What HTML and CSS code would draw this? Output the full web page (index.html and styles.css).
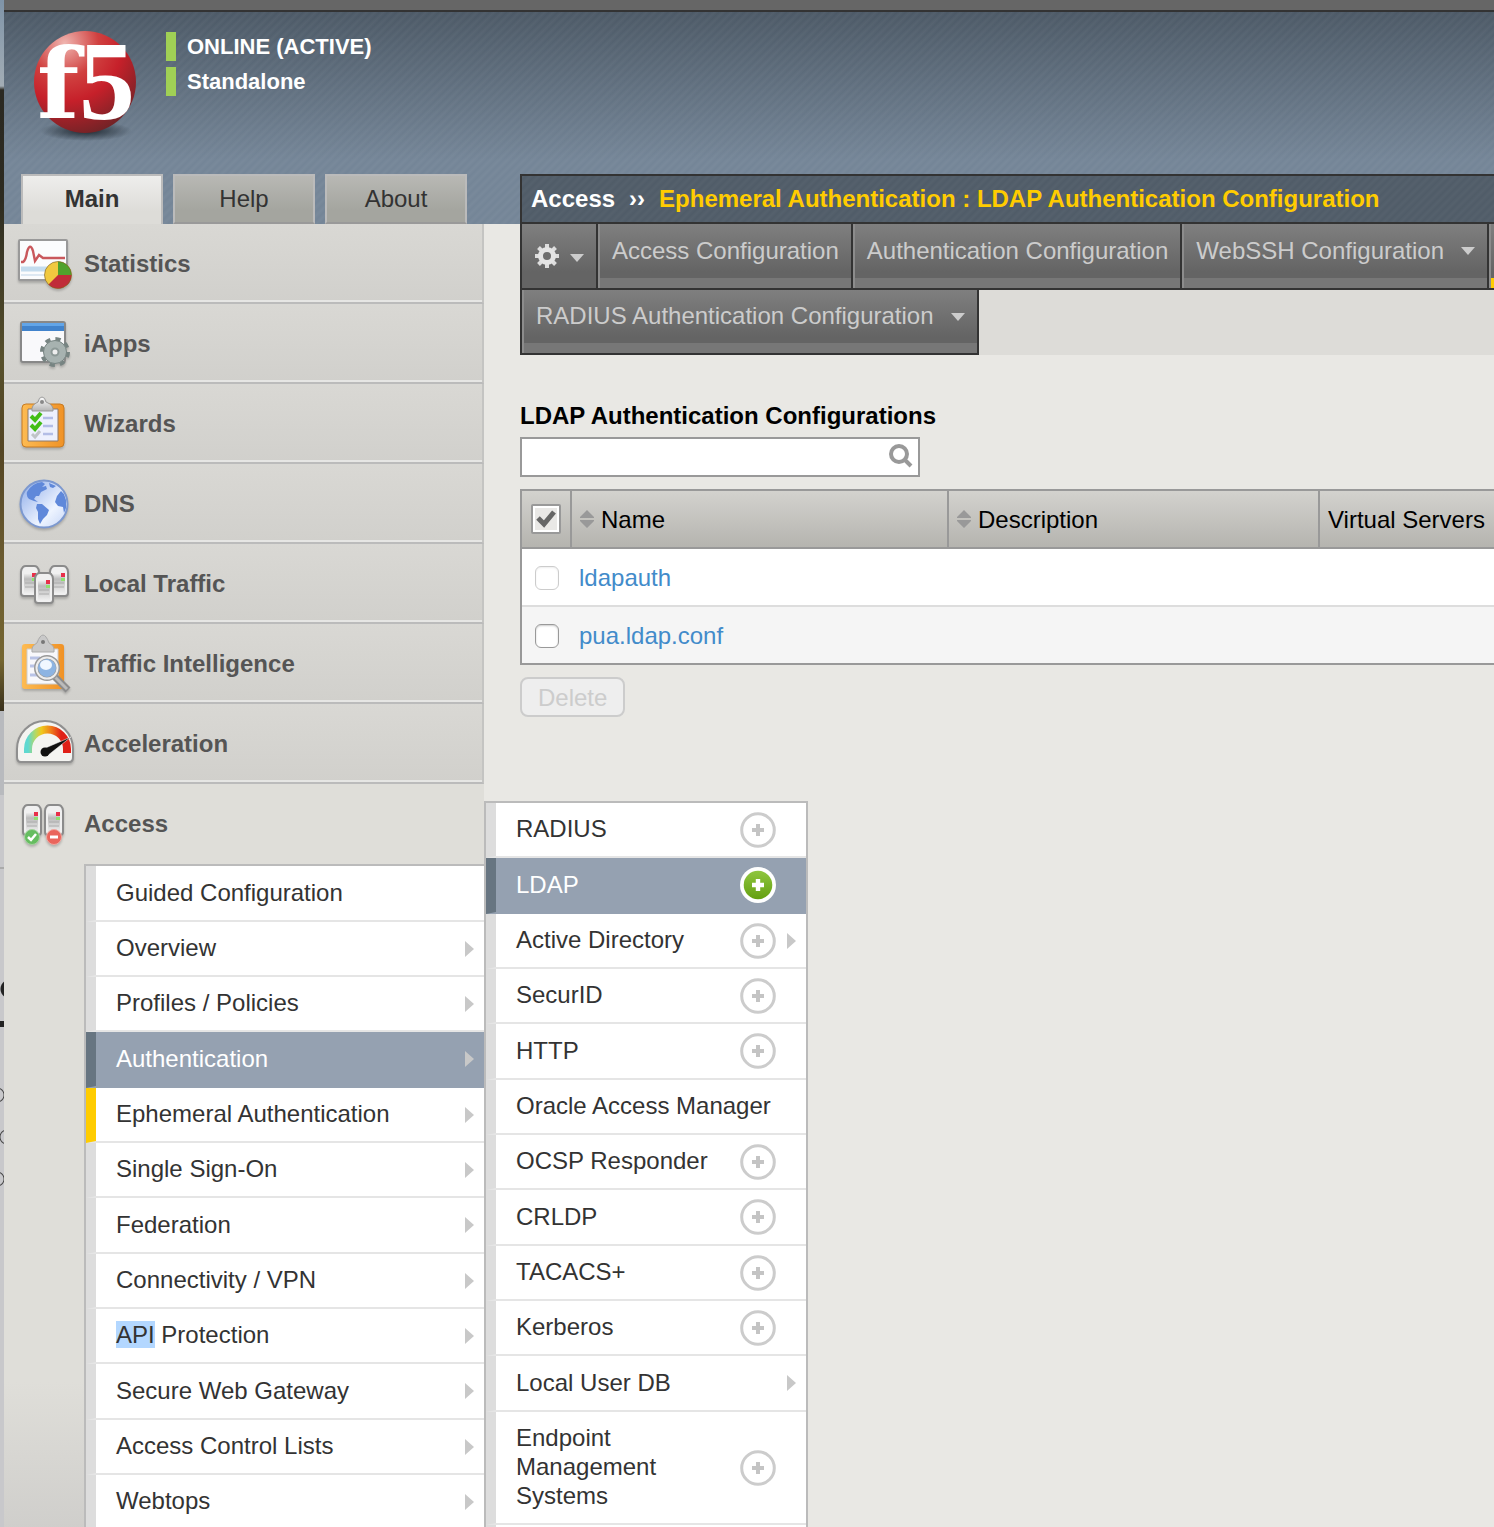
FILE: index.html
```html
<!DOCTYPE html>
<html lang="en">
<head>
<meta charset="utf-8">
<title>LDAP Authentication Configuration</title>
<meta name="viewport" content="width=device-width, initial-scale=1">
<link rel="stylesheet" href="styles.css">
</head>
<body>
<svg class="sprite" aria-hidden="true">
  <defs>
    <symbol id="arrow" viewBox="0 0 9 16"><path d="M0 0L9 8L0 16Z" fill="#c8c8c8"/></symbol>
    <symbol id="caret" viewBox="0 0 14 8"><path d="M0 0H14L7 8Z" fill="#ccc"/></symbol>
    <symbol id="plus" viewBox="0 0 36 36"><circle cx="18" cy="18" r="16.3" fill="#fff" stroke="#ccc" stroke-width="3"/><path d="M18 12V24M12 18H24" stroke="#c4c4c4" stroke-width="4"/></symbol>
    <symbol id="plus-on" viewBox="0 0 36 36"><circle cx="18" cy="18" r="18" fill="#fff"/><circle cx="18" cy="18" r="14.3" fill="url(#green)"/><path d="M18 12V24M12 18H24" stroke="#fff" stroke-width="4.4"/></symbol>
    <symbol id="sort" viewBox="0 0 14 18"><path d="M7 0L14 7V8H0V7ZM0 10H14V11L7 18L0 11Z" fill="#999"/></symbol>
    <linearGradient id="green" x2="0" y2="1"><stop offset="0" stop-color="#8fc640"/><stop offset="1" stop-color="#64a010"/></linearGradient>
    <linearGradient id="metal" x2="0" y2="1"><stop offset="0" stop-color="#fff"/><stop offset="1" stop-color="#b4b4b4"/></linearGradient>
    <linearGradient id="case" x2="0" y2="1"><stop offset="0" stop-color="#f4f4f4"/><stop offset=".3" stop-color="#bbb"/><stop offset="1" stop-color="#eee"/></linearGradient>
    <linearGradient id="board"><stop offset="0" stop-color="#fdbb52"/><stop offset="1" stop-color="#f09226"/></linearGradient>
    <linearGradient id="sea" x2="1" y2="1"><stop offset="0" stop-color="#8aa9e8"/><stop offset=".65" stop-color="#eef4ff"/><stop offset="1" stop-color="#c3d4f7"/></linearGradient>
    <linearGradient id="dial"><stop offset="0" stop-color="#5fd8d0"/><stop offset=".2" stop-color="#b9d860"/><stop offset=".35" stop-color="#f0c81c"/><stop offset=".6" stop-color="#ef7a1a"/><stop offset=".85" stop-color="#e02018"/></linearGradient>
    <radialGradient id="ball" cx=".3" cy=".12" r=".95"><stop offset="0" stop-color="#f0b5b0"/><stop offset=".35" stop-color="#d0403f"/><stop offset=".6" stop-color="#c6202a"/><stop offset="1" stop-color="#6d2326"/></radialGradient>
    <radialGradient id="shade"><stop offset="0" stop-color="#1d262e"/><stop offset="1" stop-color="#1d262e" stop-opacity="0"/></radialGradient>
    <g id="server">
      <path d="M1 7Q1 4 3 2Q4 1 6 1H14Q16 1 17 2Q19 4 19 7V28Q19 31 16 31H4Q1 31 1 28Z" fill="#f0f0f0" stroke="#8b8b8b" stroke-width="2"/>
      <path d="M4 8H16V28H4Z" fill="url(#case)"/>
      <path d="M5 18H15M5 22H15" stroke="#aaa"/>
      <path d="M12 8H16V12H12Z" fill="#e8304a"/><path d="M12 13H16V16H12Z" fill="#8fe070"/>
    </g>
  </defs>
</svg>

<div class="window">
<div class="page">
  <header class="identity">
    <svg class="logo" viewBox="0 0 108 112" role="img" aria-label="f5">
      <ellipse cx="54" cy="100" rx="46" ry="10" fill="url(#shade)"/>
      <circle cx="53" cy="51" r="51" fill="url(#ball)"/>
      <text class="logo-f" x="5" y="87">f</text><text class="logo-five" x="47" y="88">5</text>
    </svg>
    <div class="states"><strong class="state">ONLINE (ACTIVE)</strong><strong class="state">Standalone</strong></div>
  </header>

  <aside class="sidebar">
    <nav class="tabs" aria-label="Panels">
      <a class="tab tab-current" href="#">Main</a>
      <a class="tab" href="#">Help</a>
      <a class="tab" href="#">About</a>
    </nav>
    <ul class="nav">
      <li class="section"><a class="section-link" href="#">
        <svg class="icon" viewBox="0 0 60 60" aria-hidden="true"><rect x="5" y="7" width="48" height="40" rx="1" fill="#fbfcfd" stroke="#999" stroke-width="2"/><path d="M7 29H9Q12 27 13 19Q16 9 19 18L21 28L25 22L29 25H51" fill="none" stroke="#c9585c" stroke-width="2.400"/><path d="M7 36H51" stroke="#c4dcee" stroke-width="5"/><path d="M7 42H51" stroke="#dde8f2" stroke-width="2"/><circle cx="44" cy="42" r="13.500" fill="#f1c93f"/><path d="M44 42V28.500A13.500 13.500 0 0 1 57.500 42Z" fill="#50a22c"/><path d="M44 42H57.500A13.500 13.500 0 0 1 34.500 51.500Z" fill="#c02c39"/><circle cx="44" cy="42" r="13.500" fill="none" stroke="#7a5a20" stroke-opacity=".6"/></svg>
        Statistics</a></li>
      <li class="section"><a class="section-link" href="#">
        <svg class="icon" viewBox="0 0 60 60" aria-hidden="true"><rect x="7" y="9" width="44" height="40" rx="2" fill="#f9f9fb" stroke="#888" stroke-width="2"/><path d="M8 10H50V18H8Z" fill="#4183cc"/><path d="M8 10H50V13H8Z" fill="#62a5e8"/><circle cx="41" cy="39" r="12.500" fill="none" stroke="#778482" stroke-width="5" stroke-dasharray="5 4.817"/><circle cx="41" cy="39" r="11.500" fill="#a7b2b0" stroke="#778482"/><circle cx="41" cy="39" r="3.500" fill="#eee" stroke="#8c9896" stroke-width="2"/></svg>
        iApps</a></li>
      <li class="section"><a class="section-link" href="#">
        <svg class="icon" viewBox="0 0 60 60" aria-hidden="true"><rect x="8" y="11" width="42" height="43" rx="4" fill="url(#board)" stroke="#c77b22"/><path d="M14 16H44V48H14Z" fill="#edf0fd" stroke="#8a7a70"/><path d="M29 25H39M29 33H39M29 41H39" stroke="#b3bde6" stroke-width="2.500"/><path d="M17 23L21 27L27 20M17 32L21 36L27 29" fill="none" stroke="#41bd16" stroke-width="4"/><path d="M18 41L21 44L26 38" fill="none" stroke="#c0c4c8" stroke-width="3"/><path d="M18 18Q17 12 24 9Q25 4 28 4Q31 4 32 9Q40 12 39 18Z" fill="url(#metal)" stroke="#999"/><circle cx="28" cy="9" r="2" fill="#888"/></svg>
        Wizards</a></li>
      <li class="section"><a class="section-link" href="#">
        <svg class="icon" viewBox="0 0 60 60" aria-hidden="true"><circle cx="30" cy="31" r="23.500" fill="url(#sea)" stroke="#7c98cf" stroke-width="2"/><path d="M13 19Q18 10 28 9L31 11L28 14L32 13L33 16L27 19L25 23L22 23L20 26L24 29L20 28L15 26Q12 23 13 19ZM35 10L42 13L39 15L36 14ZM23 31L28 31L35 37L33 42L29 46L26 51L24 46L24 39L22 35ZM43 23L47 18L50 21L52 27L52 35L50 40L49 34L44 33L41 29Z" fill="#5f88da"/></svg>
        DNS</a></li>
      <li class="section"><a class="section-link" href="#">
        <svg class="icon" viewBox="0 0 60 60" aria-hidden="true"><use href="#server" x="6" y="12"/><use href="#server" x="35" y="12"/><use href="#server" x="20" y="19"/></svg>
        Local Traffic</a></li>
      <li class="section"><a class="section-link" href="#">
        <svg class="icon" viewBox="0 0 60 60" aria-hidden="true"><rect x="8" y="11" width="42" height="45" rx="3" fill="url(#board)"/><path d="M13 16H44V51H13Z" fill="#f8f8fb" stroke="#ccc"/><path d="M16 25H26M16 33H24M16 42H26" stroke="#b9c3e6" stroke-width="3"/><path d="M18 19Q17 13 23 10Q26 2 29 2Q32 2 35 10Q41 13 40 19Z" fill="#c9c9c9" stroke="#aaa"/><circle cx="29" cy="9" r="2" fill="#777"/><path d="M41 44L54 57" stroke="#8c8c8c" stroke-width="7"/><path d="M41 44L53 56" stroke="#bbb" stroke-width="3"/><circle cx="33" cy="35" r="11" fill="#8db4e2" stroke="#999" stroke-width="4"/><circle cx="33" cy="35" r="10.500" fill="none" stroke="#eee" stroke-width="2"/><ellipse cx="32" cy="32" rx="6" ry="5" fill="#f0f7ff"/></svg>
        Traffic Intelligence</a></li>
      <li class="section"><a class="section-link" href="#">
        <svg class="icon" viewBox="0 0 60 60" aria-hidden="true"><path d="M3 36A28 28 0 0 1 59 36V44Q59 49 55 49H7Q3 49 3 44Z" fill="#f4f4f1" stroke="#8f8f8f" stroke-width="2"/><path d="M14 40V36A17 17 0 0 1 53 36V40" fill="none" stroke="url(#dial)" stroke-width="8"/><path d="M29 36L57 24L33 43Z" fill="#111" stroke="#fff" stroke-width=".500"/><circle cx="31" cy="39" r="4.500" fill="#111"/></svg>
        Acceleration</a></li>
      <li class="section section-open"><a class="section-link" href="#">
        <svg class="icon" viewBox="0 0 60 60" aria-hidden="true"><use href="#server" x="8" y="11"/><use href="#server" x="30" y="11"/><circle cx="18" cy="44" r="7.500" fill="#66bd60" stroke="#a4d29e"/><path d="M14 44L17 47L22 41" fill="none" stroke="#fff" stroke-width="2.500"/><circle cx="40" cy="44" r="7.500" fill="#ea655c" stroke="#efa7a0"/><path d="M36 44H44" stroke="#fff" stroke-width="3"/></svg>
        Access</a>
        <ul class="menu submenu">
          <li class="row"><a class="row-link" href="#">Guided Configuration</a></li>
          <li class="row"><a class="row-link" href="#">Overview</a><svg class="arrow" aria-hidden="true"><use href="#arrow"/></svg></li>
          <li class="row"><a class="row-link" href="#">Profiles / Policies</a><svg class="arrow" aria-hidden="true"><use href="#arrow"/></svg></li>
          <li class="row row-hover"><a class="row-link" href="#">Authentication</a><svg class="arrow" aria-hidden="true"><use href="#arrow"/></svg></li>
          <li class="row row-current"><a class="row-link" href="#">Ephemeral Authentication</a><svg class="arrow" aria-hidden="true"><use href="#arrow"/></svg></li>
          <li class="row"><a class="row-link" href="#">Single Sign-On</a><svg class="arrow" aria-hidden="true"><use href="#arrow"/></svg></li>
          <li class="row"><a class="row-link" href="#">Federation</a><svg class="arrow" aria-hidden="true"><use href="#arrow"/></svg></li>
          <li class="row"><a class="row-link" href="#">Connectivity / VPN</a><svg class="arrow" aria-hidden="true"><use href="#arrow"/></svg></li>
          <li class="row"><a class="row-link" href="#"><span class="selected">API</span> Protection</a><svg class="arrow" aria-hidden="true"><use href="#arrow"/></svg></li>
          <li class="row"><a class="row-link" href="#">Secure Web Gateway</a><svg class="arrow" aria-hidden="true"><use href="#arrow"/></svg></li>
          <li class="row"><a class="row-link" href="#">Access Control Lists</a><svg class="arrow" aria-hidden="true"><use href="#arrow"/></svg></li>
          <li class="row"><a class="row-link" href="#">Webtops</a><svg class="arrow" aria-hidden="true"><use href="#arrow"/></svg></li>
        </ul>
        <ul class="menu flyout">
          <li class="row"><a class="row-link" href="#">RADIUS</a><a class="add" href="#" aria-label="Add RADIUS"><svg><use href="#plus"/></svg></a></li>
          <li class="row row-hover"><a class="row-link" href="#">LDAP</a><a class="add" href="#" aria-label="Add LDAP"><svg><use href="#plus-on"/></svg></a></li>
          <li class="row"><a class="row-link" href="#">Active Directory</a><a class="add" href="#" aria-label="Add Active Directory"><svg><use href="#plus"/></svg></a><svg class="arrow" aria-hidden="true"><use href="#arrow"/></svg></li>
          <li class="row"><a class="row-link" href="#">SecurID</a><a class="add" href="#" aria-label="Add SecurID"><svg><use href="#plus"/></svg></a></li>
          <li class="row"><a class="row-link" href="#">HTTP</a><a class="add" href="#" aria-label="Add HTTP"><svg><use href="#plus"/></svg></a></li>
          <li class="row"><a class="row-link" href="#">Oracle Access Manager</a></li>
          <li class="row"><a class="row-link" href="#">OCSP Responder</a><a class="add" href="#" aria-label="Add OCSP Responder"><svg><use href="#plus"/></svg></a></li>
          <li class="row"><a class="row-link" href="#">CRLDP</a><a class="add" href="#" aria-label="Add CRLDP"><svg><use href="#plus"/></svg></a></li>
          <li class="row"><a class="row-link" href="#">TACACS+</a><a class="add" href="#" aria-label="Add TACACS+"><svg><use href="#plus"/></svg></a></li>
          <li class="row"><a class="row-link" href="#">Kerberos</a><a class="add" href="#" aria-label="Add Kerberos"><svg><use href="#plus"/></svg></a></li>
          <li class="row"><a class="row-link" href="#">Local User DB</a><svg class="arrow" aria-hidden="true"><use href="#arrow"/></svg></li>
          <li class="row"><a class="row-link" href="#">Endpoint Management Systems</a><a class="add" href="#" aria-label="Add Endpoint Management Systems"><svg><use href="#plus"/></svg></a></li>
          <li class="row"></li>
        </ul>
      </li>
    </ul>
  </aside>

  <main class="content">
    <h1 class="crumbs"><span>Access</span><span>››</span><span class="crumb-here">Ephemeral Authentication : LDAP Authentication Configuration</span></h1>
    <nav class="pages" aria-label="Configuration pages">
      <div class="pages-line">
        <button class="gear" type="button" aria-label="Options">
          <svg class="gear-icon" viewBox="0 0 26 26" aria-hidden="true"><g stroke="#ddd" stroke-width="4"><path d="M13 1V25M1 13H25M4.500 4.500L21.500 21.500M21.500 4.500L4.500 21.500"/></g><circle cx="13" cy="13" r="6.500" fill="#6e6e6e" stroke="#e4e4e4" stroke-width="5"/></svg>
          <svg class="caret" aria-hidden="true"><use href="#caret"/></svg>
        </button>
        <a class="page-tab" href="#">Access Configuration</a>
        <a class="page-tab" href="#">Authentication Configuration</a>
        <a class="page-tab" href="#">WebSSH Configuration<svg class="caret" aria-hidden="true"><use href="#caret"/></svg></a>
        <span class="page-tab page-tab-current"></span>
      </div>
      <div class="pages-line">
        <a class="page-tab" href="#">RADIUS Authentication Configuration<svg class="caret" aria-hidden="true"><use href="#caret"/></svg></a>
      </div>
    </nav>

    <section class="list">
      <h2 class="list-title"><label for="filter">LDAP Authentication Configurations</label></h2>
      <div class="search">
        <input class="search-box" id="filter" type="text">
        <svg class="search-icon" viewBox="0 0 24 24" aria-hidden="true"><circle cx="10" cy="10" r="8" fill="none" stroke="#999" stroke-width="4"/><path d="M15 15L22 22" stroke="#999" stroke-width="4"/></svg>
      </div>
      <table class="configs">
        <thead><tr>
          <th class="col-check"><input class="check-all" type="checkbox" checked aria-label="Select all"></th>
          <th class="col-name"><span class="sortable"><svg class="sort" aria-hidden="true"><use href="#sort"/></svg>Name</span></th>
          <th class="col-description"><span class="sortable"><svg class="sort" aria-hidden="true"><use href="#sort"/></svg>Description</span></th>
          <th class="col-servers">Virtual Servers</th>
        </tr></thead>
        <tbody>
          <tr><td class="cell-check"><input class="check" type="checkbox" disabled aria-label="Select ldapauth"></td><td><a class="config" href="#">ldapauth</a></td><td></td><td></td></tr>
          <tr><td class="cell-check"><input class="check" type="checkbox" aria-label="Select pua.ldap.conf"></td><td><a class="config" href="#">pua.ldap.conf</a></td><td></td><td></td></tr>
        </tbody>
      </table>
      <button class="delete" type="button" disabled>Delete</button>
    </section>
  </main>
</div>
</div>
</body>
</html>
```
FILE: styles.css
```css
* { box-sizing: border-box; }

body {
  margin: 0;
  font: 24px/29px "Liberation Sans", Arial, sans-serif;
  color: #333;
}

ul { margin: 0; padding: 0; list-style: none; }
a { color: inherit; text-decoration: none; }
svg { display: block; flex: none; }
button, input { margin: 0; font: inherit; }
.sprite { position: absolute; width: 0; height: 0; }

/* The sliver of desktop that shows left of the browser window */
.window {
  height: 100vh;
  overflow: hidden;
  padding-left: 4px;
  background:
    radial-gradient(circle at 10px 989px, #222 9px, transparent 10px),
    linear-gradient(#222, #222) 0 1021px / 4px 6px no-repeat,
    radial-gradient(circle at -3px 1095px, transparent 6px, #444 7px, transparent 8px),
    radial-gradient(circle at 7px 1137px, transparent 6px, #444 7px, transparent 8px),
    radial-gradient(circle at -3px 1179px, transparent 6px, #444 7px, transparent 8px),
    linear-gradient(#aaa, #aaa) 0 867px / 4px 2px no-repeat,
    linear-gradient(#7f94a8, #a3adb5 86px, #2b2922 90px, #2d2b21 200px, #57502c 360px, #544524 450px, #6b5b30 560px, #756631 660px, #39301c 711px, #b8babe 711px, #b8babe 795px, #c8c8cb 795px);
}

.page {
  display: grid;
  grid-template-columns: 480px minmax(0, 1fr);
  grid-template-rows: 162px auto;
  min-height: 100%;
  border-top: 10px solid #666;
  background:
    linear-gradient(#333, #333) 0 0 / 100% 2px no-repeat,
    repeating-linear-gradient(135deg, rgba(255, 255, 255, .04), transparent 3px, rgba(255, 255, 255, .04) 6px) 0 0 / 100% 214px no-repeat,
    linear-gradient(#4c5966, #748597 150px, #748597) 0 0 / 100% 214px no-repeat,
    #e9e8e4;
}

.identity {
  grid-column: 1 / -1;
  display: flex;
  gap: 26px;
  padding: 21px 28px 0;
  height: 164px;
}
.logo { width: 108px; height: 112px; overflow: visible; }
.logo-f, .logo-five { fill: #fff; }
.logo-f { font: bold 98px "DejaVu Serif", serif; }
.logo-five { font: bold 112px "Liberation Serif", serif; }
.states { display: flex; flex-direction: column; gap: 6px; padding-top: 1px; }
.state {
  border-left: 10px solid #a0d055;
  padding-left: 11px;
  font-size: 22px;
  color: #fff;
}

/* Sidebar */
.sidebar { display: flex; flex-direction: column; padding-top: 2px; }
.tabs { display: flex; gap: 10px; padding-left: 17px; }
.tab {
  width: 142px;
  height: 50px;
  border: 2px solid #bbb;
  border-bottom-color: #999;
  background: linear-gradient(#b8b8b4, #a4a59f 75%);
  line-height: 46px;
  text-align: center;
}
.tab-current {
  border-bottom: 0;
  background: linear-gradient(#eeeeec, #dddcd8 75%);
  font-weight: bold;
}
.nav { flex: 1; display: flex; flex-direction: column; }
.section {
  height: 80px;
  border-right: 2px solid #c4c4c2;
  border-bottom: 2px solid #bbb;
  box-shadow: inset 0 -2px #e6e6e4;
  background: linear-gradient(#d9d8d4, #d1d0cc);
}
.section-open {
  position: relative;
  flex: 1;
  height: auto;
  border: 0;
  box-shadow: none;
  background: linear-gradient(#dfded9 80%, #cfcecb);
}
.section-link {
  display: flex;
  align-items: center;
  gap: 10px;
  height: 80px;
  padding: 0 0 2px 10px;
  font-weight: bold;
  color: #555;
}
.icon { width: 60px; height: 60px; filter: drop-shadow(0 2px 1px rgba(0, 0, 0, .2)); }

/* Menus */
.menu { border: 2px solid #bbb; background: #fff; }
.submenu { margin-left: 80px; border-right: 0; }
.flyout { position: absolute; top: 17px; left: 480px; width: 324px; }
.row {
  display: flex;
  align-items: center;
  min-height: 55px;
  padding-right: 10px;
  border-left: 10px solid #ddd;
  border-bottom: 2px solid #e5e5e5;
}
.submenu .row:nth-child(3n+1), .flyout .row:nth-child(3n+2) { min-height: 56px; }
.row-link { flex: 1; padding: 11px 0 13px 20px; }
.row-hover { border-left-color: #677581; border-bottom-color: #95a1b1; background: #95a1b1; color: #fff; }
.row-current { border-left-color: #fc0; }
.arrow { width: 9px; height: 16px; }
.add { width: 36px; height: 36px; margin-right: 20px; }
.add svg { width: 36px; height: 36px; }
.add:has(+ .arrow) { margin-right: 11px; }
.selected { background: #b3d7ff; }

/* Content */
.content { padding: 2px 0 0 36px; overflow: hidden; }
.crumbs {
  display: flex;
  gap: 14px;
  height: 50px;
  margin: 0;
  padding-left: 9px;
  border: solid #333;
  border-width: 2px 0 2px 2px;
  background:
    repeating-linear-gradient(135deg, rgba(255, 255, 255, .03), transparent 3px, rgba(255, 255, 255, .03) 6px),
    #505c68;
  font-size: 24px;
  line-height: 46px;
  color: #fff;
  white-space: nowrap;
}
.crumb-here { color: #fc0; }
.pages { background: #dddcd8; }
.pages-line { display: flex; border-left: 2px solid #333; overflow: hidden; }
.gear, .page-tab {
  flex: none;
  display: flex;
  height: 66px;
  border: 0 solid #333;
  border-width: 0 2px 2px 0;
  background: linear-gradient(#7f7f7f, #646464 75%);
  color: #ccc;
}
.gear { align-items: center; gap: 10px; width: 76px; padding: 0 10px 0 12px; }
.gear-icon { width: 26px; height: 26px; }
.gear .caret { margin-top: 4px; }
.page-tab {
  gap: 17px;
  padding: 0 12px 10px 14px;
  box-shadow: inset 2px 0 #8c8c8c, inset 0 -10px #777;
  line-height: 54px;
}
.page-tab-current { width: 320px; box-shadow: inset 2px 0 #8c8c8c, inset 0 -10px #fc0; }
.pages-line + .pages-line .page-tab { height: 65px; line-height: 52px; }
.caret { width: 14px; height: 8px; align-self: center; }

.list { padding-top: 45px; color: #000; }
.list-title { margin: 0 0 5px; font-size: 24px; line-height: 32px; }
.search {
  display: flex;
  align-items: center;
  width: 400px;
  height: 40px;
  border: 2px solid #999;
  background: #fff;
}
.search-box { flex: 1; height: 36px; border: 0; padding: 0 8px; background: none; }
.search-icon { width: 24px; height: 24px; margin: 0 5px 2px 0; }

.configs {
  width: 100%;
  margin: 12px 0;
  border: solid #999;
  border-width: 2px 0 2px 2px;
  border-spacing: 0;
  table-layout: fixed;
}
.configs th {
  height: 58px;
  padding: 0 8px;
  border: solid #999;
  border-width: 0 2px 2px 0;
  background: linear-gradient(#d3d2ce, #b5b4af);
  font-weight: normal;
  text-align: left;
  white-space: nowrap;
}
.configs .col-check { width: 50px; padding: 0 9px; }
.configs .col-name { width: 377px; }
.configs .col-description { width: 371px; }
.configs .col-servers { border-right: 0; }
.configs td { height: 58px; padding: 0 7px; background: #fff; }
.configs tr:first-child td { border-bottom: 2px solid #ddd; }
.configs tr:last-child td { height: 56px; background: #f5f5f5; }
.configs .cell-check { padding: 2px 13px 0; }
.sortable { display: flex; align-items: center; gap: 7px; }
.sort { width: 14px; height: 18px; }
.config { color: #428bca; }
.check, .check-all { display: block; appearance: none; background: #fff; }
.check {
  width: 24px;
  height: 24px;
  border: 1px solid #999;
  border-radius: 6px;
  box-shadow: inset 0 1px 2px #ccc;
}
.check:disabled { border-color: #ccc; box-shadow: inset 0 1px 2px #eee; }
.check-all {
  width: 30px;
  height: 30px;
  border: 2px solid #999;
  border-radius: 2px;
  background: url("data:image/svg+xml,%3Csvg xmlns='http://www.w3.org/2000/svg' viewBox='0 0 26 26'%3E%3Cpath d='M2 2H24V24H2Z' fill='%23e9e8e6'/%3E%3Cpath d='M5 12L11 18L21 6' fill='none' stroke='%23666' stroke-width='5'/%3E%3C/svg%3E") #fff;
}
.delete {
  height: 40px;
  padding: 0 16px;
  border: 2px solid #ccc;
  border-radius: 8px;
  background: #eee;
  color: #ccc;
}
```
